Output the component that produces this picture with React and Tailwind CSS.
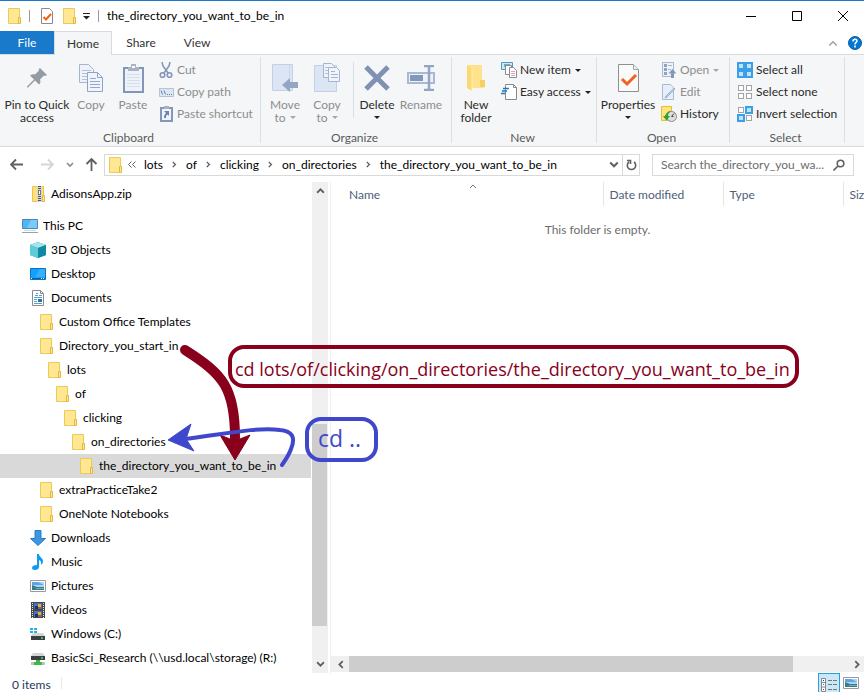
import React from "react";

const Folder = () => (
  <svg width="16" height="16" viewBox="0 0 16 16" className="shrink-0">
    <path d="M2.5 .5h11v15h-11z" fill="#ffe794" stroke="#edc956" />
    <path d="M12.5 9.5h2v6h-2z" fill="#ffe794" stroke="#e3b93c" />
  </svg>
);

const Zip = () => (
  <svg width="16" height="16" viewBox="0 0 16 16" className="shrink-0">
    <path d="M2.5 .5h11v15h-11z" fill="#ffe07a" stroke="#edc14a" />
    <path d="M12.5 9.5h2v6h-2z" fill="#ffe794" stroke="#e3b93c" />
    <path d="M7 0h5v16H7z" fill="#d7d7d7" />
    <path d="M9.500 0v16" stroke="#555" strokeWidth="3" strokeDasharray="1 1" />
    <path d="M8 4h3v5H8z" fill="#777" />
    <path d="M9 5h1v3H9z" fill="#fff" />
  </svg>
);

const ThisPC = () => (
  <svg width="16" height="16" viewBox="0 0 16 16" className="shrink-0">
    <path d="M.5 1.500h15v9H.5z" fill="#4fb7f5" stroke="#4b89b0" />
    <path d="M9 2h6v8H5z" fill="#7bcbfa" />
    <path d="M0 14.500h16" stroke="#8fa5b3" />
    <path d="M2 12.500h12" stroke="#d3dce2" />
  </svg>
);

const Cube = () => (
  <svg width="16" height="16" viewBox="0 0 16 16" className="shrink-0">
    <path d="M8 0l8 3v10l-8 3-8-3V3z" fill="#1fa3b8" />
    <path d="M8 0l8 3-8 3-8-3z" fill="#a6e3ea" />
    <path d="M0 3l8 3v10l-8-3z" fill="#5fcbd8" />
    <path d="M8 6l8-3v10l-8 3z" fill="#0f8aa5" />
  </svg>
);

const Desktop = () => (
  <svg width="16" height="16" viewBox="0 0 16 16" className="shrink-0">
    <path d="M.5 2.500h15v11H.5z" fill="#14a0ff" stroke="#0f6fb8" />
    <path d="M10 3h5v8H5z" fill="#35b0ff" />
    <path d="M1 12.500h14" stroke="#0a5ea8" />
    <path d="M1 12.500h1M11 12.500h1M13 12.500h1" stroke="#fff" />
  </svg>
);

const Documents = () => (
  <svg width="16" height="16" viewBox="0 0 16 16" className="shrink-0">
    <path d="M2.500 .5h8l3 3v12h-11z" fill="#fff" stroke="#8b8b8b" />
    <path d="M10.500 .5v3h3" fill="none" stroke="#8b8b8b" />
    <path d="M6 3.500h2M5 5.500h3M9 5.500h3M4 7.500h8M4 9.500h3M4 11.500h3M4 13.500h8" stroke="#4aa3d8" />
    <path d="M8 9h4v3H8z" fill="#3a6f95" />
  </svg>
);

const Downloads = () => (
  <svg width="16" height="16" viewBox="0 0 16 16" className="shrink-0">
    <path d="M5 .5h6v8h4.500L8 15.500.5 8.500H5z" fill="#3b97e3" stroke="#2b7cc4" />
  </svg>
);

const Music = () => (
  <svg width="16" height="16" viewBox="0 0 16 16" className="shrink-0">
    <path d="M7 0h2c0 3 4 4 4 7 0 2-1 3-2 4 .500-3 0-4-2-5v7c0 2-2 3-4 3s-3-1-3-2c0-2 2-3 5-3z" fill="#0f9bf2" />
  </svg>
);

const Pictures = () => (
  <svg width="16" height="16" viewBox="0 0 16 16" className="shrink-0">
    <path d="M.5 2.500h15v11H.5z" fill="#fff" stroke="#9a9a9a" />
    <path d="M2 4h12v8H2z" fill="#a9d5f7" />
    <path d="M2 4h6l6 3H2z" fill="#5ba5e6" />
    <path d="M2 7l5 2h7v3H2z" fill="#3d7c80" />
    <path d="M6 10.500h8" stroke="#6fa9cf" />
  </svg>
);

const Videos = () => (
  <svg width="16" height="16" viewBox="0 0 16 16" className="shrink-0">
    <path d="M1 0h14v16H1z" fill="#474747" />
    <path d="M2.500 1v15M13.500 1v15" stroke="#e8e8e8" strokeDasharray="1 1" />
    <path d="M4 1h8v6H4zM4 9h8v6H4z" fill="#3f74c7" />
    <path d="M5 4h3v3H5zM5 12h3v3H5z" fill="#1f2f60" />
    <path d="M8 2h3v3H8zM8 10h3v3H8z" fill="#e8b32a" />
    <path d="M9 5h2v2H9zM9 13h2v2H9z" fill="#c44b2c" />
  </svg>
);

const DriveC = () => (
  <svg width="16" height="16" viewBox="0 0 16 16" className="shrink-0">
    <path d="M0 2h3v2H0zM4 2h3v2H4zM0 5h3v2H0zM4 5h3v2H4z" fill="#1fb4f0" />
    <path d="M3 7h10l2 3H1z" fill="#d5d5d5" />
    <path d="M1 10h14v4H1z" fill="#3c3f41" />
    <path d="M11 12h2" stroke="#3bea5c" strokeWidth="1.500" />
  </svg>
);

const DriveNet = () => (
  <svg width="16" height="16" viewBox="0 0 16 16" className="shrink-0">
    <path d="M3 3h10l2 3H1z" fill="#d5d5d5" />
    <path d="M1 6h14v4H1z" fill="#3c3f41" />
    <path d="M11 8h2" stroke="#3bea5c" strokeWidth="1.500" />
    <path d="M6 10h4v2H6zM3 12h10v3H3z" fill="#43b649" />
    <path d="M1 13.500h3M12 13.500h3" stroke="#b9c9b9" strokeWidth="3" />
  </svg>
);

const tree = [
  { label: "This PC", level: 0, icon: ThisPC },
  { label: "3D Objects", level: 1, icon: Cube },
  { label: "Desktop", level: 1, icon: Desktop },
  { label: "Documents", level: 1, icon: Documents },
  { label: "Custom Office Templates", level: 2, icon: Folder },
  { label: "Directory_you_start_in", level: 2, icon: Folder },
  { label: "lots", level: 3, icon: Folder },
  { label: "of", level: 4, icon: Folder },
  { label: "clicking", level: 5, icon: Folder },
  { label: "on_directories", level: 6, icon: Folder },
  { label: "the_directory_you_want_to_be_in", level: 7, icon: Folder, selected: true },
  { label: "extraPracticeTake2", level: 2, icon: Folder },
  { label: "OneNote Notebooks", level: 2, icon: Folder },
  { label: "Downloads", level: 1, icon: Downloads },
  { label: "Music", level: 1, icon: Music },
  { label: "Pictures", level: 1, icon: Pictures },
  { label: "Videos", level: 1, icon: Videos },
  { label: "Windows (C:)", level: 1, icon: DriveC },
  { label: "BasicSci_Research (\\\\usd.local\\storage) (R:)", level: 1, icon: DriveNet },
];

function TreeRow({ label, level, icon: Icon, selected }) {
  return (
    <li>
      <button
        className={"flex h-6 w-full items-center gap-[5px] whitespace-nowrap text-left " + (selected ? "bg-[#d9d9d9]" : "")}
        style={{ paddingLeft: 22 + level * 8 }}
      >
        <Icon />
        <span>{label}</span>
      </button>
    </li>
  );
}

const Caret = ({ muted }) => (
  <svg width="6" height="3" viewBox="0 0 6 3" className="inline-block shrink-0">
    <path d="M0 0h6L3 3z" fill={muted ? "#a8a8a8" : "#222"} />
  </svg>
);

function BigButton({ icon, lines, caret, muted, width }) {
  return (
    <button className={"flex flex-col items-center gap-1 whitespace-nowrap leading-[13px] " + width + (muted ? " text-[#8d8d8d]" : " text-[#2b2b2b]")}>
      <span className="flex h-8 items-center justify-center">{icon}</span>
      <span className="flex flex-col items-center">
        {lines.map((l, i) => (
          <span key={l} className="flex items-center gap-1">
            {l}
            {caret === "inline" && i === lines.length - 1 && <Caret muted={muted} />}
          </span>
        ))}
        {caret === "below" && (
          <span className="flex h-3 items-center">
            <Caret />
          </span>
        )}
      </span>
    </button>
  );
}

function SmallButton({ icon, label, caret, muted }) {
  return (
    <button className={"flex h-[22px] items-center gap-[3px] whitespace-nowrap " + (muted ? "text-[#8d8d8d]" : "text-[#2b2b2b]")}>
      <span className="flex w-4 justify-center">{icon}</span>
      <span className="pr-px">{label}</span>
      {caret && <Caret muted={muted} />}
    </button>
  );
}

function Group({ title, children }) {
  return (
    <section className="relative flex flex-col justify-between">
      <div className="flex pt-1">{children}</div>
      <h2 className="pr-1 text-center leading-4 text-[#5a5a5a]">{title}</h2>
      <span className="absolute right-0 top-[2px] h-[86px] w-px bg-[#dcdfe2]" />
    </section>
  );
}

const PinIcon = () => (
  <svg width="20" height="20" viewBox="0 0 20 20">
    <path d="M13 0l7 7-2 1-1-.500-4 4c1 3 0 4-1 5l-4-4-7 7H0v-1l7-7-4-4c2-1.500 4-1.500 5-1l4-4-.500-1z" fill="#939ca4" />
  </svg>
);
const CopyIcon = () => (
  <svg width="26" height="28" viewBox="0 0 26 28">
    <path d="M1.500 .5h9l5 5v13h-14z" fill="#eef3fa" stroke="#a3b5d0" />
    <path d="M4 6.500h9M4 9.500h9M4 12.500h9M4 15.500h5" stroke="#b2c1d8" />
    <path d="M9.500 8.500h10l5 5v14h-15z" fill="#f1f5fb" stroke="#8fa5c5" />
    <path d="M19.500 8.500v5h5" fill="none" stroke="#8fa5c5" />
    <path d="M12 14.500h6M12 17.500h10M12 20.500h10M12 23.500h10" stroke="#94a9c9" />
  </svg>
);
const PasteIcon = () => (
  <svg width="21" height="29" viewBox="0 0 21 29">
    <path d="M1 4h19v24H1z" fill="#eef3fa" stroke="#8396b8" strokeWidth="2" />
    <path d="M4 10.500h13M4 13.500h13M4 16.500h13M4 19.500h13M4 22.500h13" stroke="#d3deee" />
    <path d="M5 3h3V0h5v3h3v4H5z" fill="#a9b2c0" />
    <path d="M9 2h3v2H9z" fill="#fff" />
  </svg>
);
const CutIcon = () => (
  <svg width="14" height="17" viewBox="0 0 14 17" fill="none" stroke="#8397bb" strokeWidth="1.600">
    <path d="M3 0l1 4 5 7M11 0l-1 4-5 7" />
    <circle cx="3.500" cy="13" r="2.300" />
    <circle cx="10.500" cy="13" r="2.300" />
  </svg>
);
const PathIcon = () => (
  <svg width="15" height="9" viewBox="0 0 15 9">
    <path d="M.5 .5h14v8H.5z" fill="#dce6f4" stroke="#b3c3dc" />
    <path d="M2 2.500l1.500 4M5 2.500l1.500 4" stroke="#6d80a5" />
    <path d="M8 6.500h1M10 6.500h1M12 6.500h1" stroke="#6d80a5" />
  </svg>
);
const ShortcutIcon = () => (
  <svg width="13" height="16" viewBox="0 0 13 16">
    <path d="M1 2h11v13H1z" fill="#f1f5fb" stroke="#8397bb" strokeWidth="2" />
    <path d="M4 0h5v3H4z" fill="#a9b2c0" />
    <path d="M4 5h5v5L7.500 8.500C6 9.500 6 10.500 6 12H4c0-2 .500-3.500 2-5z" fill="#6d84ad" />
  </svg>
);
const MoveIcon = () => (
  <svg width="27" height="29" viewBox="0 0 27 29">
    <path d="M.5 .5h20v26H.5z" fill="#dbe5f4" stroke="#c3d1e8" />
    <path d="M17.500 .5v26" stroke="#cad7eb" />
    <path d="M26 18v6h-8v4l-8-7 8-7v4z" fill="#95a5c4" />
  </svg>
);
const CopyToIcon = () => (
  <svg width="27" height="30" viewBox="0 0 27 30">
    <path d="M.5 2.500h22v26H.5z" fill="#dbe5f4" stroke="#c3d1e8" />
    <path d="M9.500 .5h8l3 3v11h-11z" fill="#eef3fa" stroke="#a3b5d0" />
    <path d="M11 4.500h6M11 7.500h6M11 10.500h6" stroke="#b2c1d8" />
    <path d="M14.500 4.500h8l3 3v11h-11z" fill="#f1f5fb" stroke="#a3b5d0" />
    <path d="M17 8.500h4M17 11.500h7M17 14.500h7" stroke="#a3b5d0" />
  </svg>
);
const DeleteIcon = () => (
  <svg width="26" height="26" viewBox="0 0 26 26">
    <path d="M2 2l22 22M24 2L2 24" stroke="#8092b4" strokeWidth="5" />
  </svg>
);
const RenameIcon = () => (
  <svg width="28" height="26" viewBox="0 0 28 26">
    <path d="M1 8h26v10H1z" fill="#eef3fa" stroke="#a9b9d3" strokeWidth="2" />
    <path d="M3 10h13v6H3z" fill="#8397bb" />
    <path d="M17 1h4l1 1 1-1h4M22 1v24M17 25h4l1-1 1 1h4" fill="none" stroke="#94a4c3" strokeWidth="2.500" />
  </svg>
);
const NewFolderIcon = () => (
  <svg width="20" height="28" viewBox="0 0 20 28">
    <path d="M1 1h15v15l2 1v7H1z" fill="#ffe28c" />
    <path d="M14 16h5v7h-5z" fill="#f7cf66" />
    <path d="M1 1l5 4v22l-5-3z" fill="#fcd873" />
    <path d="M6 5v22" stroke="#fff0bd" />
  </svg>
);
const NewItemIcon = () => (
  <svg width="16" height="16" viewBox="0 0 16 16">
    <path d="M.5 .5h11v7H.5z" fill="#cdeafa" stroke="#4a9cc8" />
    <path d="M3 2h6v3H3z" fill="#7ba8c2" />
    <path d="M4.500 3.500h6v9h-6z" fill="#fff" stroke="#8a8a8a" />
    <path d="M8.500 5.500h4l3 3v7h-7z" fill="#fff" stroke="#8a8a8a" />
    <path d="M10 9.500h4M10 11.500h4M10 13.500h4" stroke="#d9a3c0" />
  </svg>
);
const EasyIcon = () => (
  <svg width="16" height="16" viewBox="0 0 16 16">
    <path d="M4.500 .5h8l3 3v12h-11z" fill="#fff" stroke="#8a8a8a" />
    <path d="M12.500 .5v3h3" fill="none" stroke="#8a8a8a" />
    <path d="M2 4.500h6M1 7h5M0 9.500h4" stroke="#1f78c1" strokeWidth="1.500" />
  </svg>
);
const PropertiesIcon = () => (
  <svg width="21" height="28" viewBox="0 0 21 28">
    <path d="M.5 .5h15l5 5v22H.5z" fill="#fafafa" stroke="#8f8f8f" />
    <path d="M15.500 .5v5h5" fill="#eee" stroke="#a5a5a5" />
    <path d="M4 15l5 5 9-9" fill="none" stroke="#f2601c" strokeWidth="3" />
  </svg>
);
const OpenIcon = () => (
  <svg width="14" height="16" viewBox="0 0 14 16">
    <path d="M.5 .5h11v14H.5z" fill="#eef3fa" stroke="#a9b9d3" />
    <path d="M2 2h3v3H2zM2 6h3v3H2zM2 10h3v3H2z" fill="#8fa3c4" />
    <path d="M6 3.500h4M6 7.500h3" stroke="#a9b9d3" />
    <path d="M10.500 7l4 4.500H12V16H9v-4.500H6.500z" fill="#8397bb" />
  </svg>
);
const EditIcon = () => (
  <svg width="14" height="16" viewBox="0 0 14 16">
    <path d="M.5 .5h8l3 3v12H.5z" fill="#e6eef9" stroke="#a9b9d3" />
    <path d="M13 5L5 13l-2 1 1-2 8-8z" fill="#c4d2e8" stroke="#9fb0cd" />
  </svg>
);
const HistoryIcon = () => (
  <svg width="16" height="16" viewBox="0 0 16 16">
    <path d="M.5 .5h10v14H.5z" fill="#ffe579" stroke="#e3bd45" />
    <circle cx="10.500" cy="10.500" r="5" fill="#dedede" stroke="#8a8a8a" />
    <path d="M10.500 10.500l2.500-3M10.500 10.500h2" stroke="#444" />
    <path d="M2 10h2c1-3 3-5 6-5-2 1.500-3 3-3 5h2l-3.500 4.500z" fill="#2da23a" />
  </svg>
);
const Squares = ({ on }) => (
  <svg width="16" height="16" viewBox="0 0 16 16">
    {[0, 1, 2, 3].map((i) => {
      const x = (i % 2) * 8;
      const y = i > 1 ? 8 : 0;
      return on.includes(i) ? (
        <rect key={i} x={x + 1} y={y + 1} width="6" height="6" fill="#bfe3fa" stroke="#3a9fe6" strokeWidth="2" />
      ) : (
        <rect key={i} x={x + 1.5} y={y + 1.5} width="5" height="5" fill="#fff" stroke="#a3a3a3" />
      );
    })}
  </svg>
);

const Chevron = ({ d, color = "#606060", w = 8, h = 8, sw = 1.6 }) => (
  <svg width={w} height={h} viewBox="0 0 8 8" fill="none" stroke={color} strokeWidth={sw} className="shrink-0">
    <path d={d} />
  </svg>
);
const UP = "M1 6l3-3 3 3";
const DOWN = "M1 2l3 3 3-3";
const LEFT = "M6 1L3 4l3 3";
const RIGHT = "M2 1l3 3-3 3";

function TitleBar() {
  return (
    <header className="flex h-[31px] items-center border-t border-[#1979ca] bg-white">
      <div className="flex flex-1 items-center pl-[6px]">
        <Folder />
        <span className="ml-[7px] h-3 w-px bg-[#9a9a9a]" />
        <button aria-label="Properties" className="ml-[10px]">
          <svg width="14" height="16" viewBox="0 0 14 16" className="block">
            <path d="M1.500 .5h8l3 3v12h-11z" fill="#fff" stroke="#8a8a8a" />
            <path d="M3.500 9l2.500 2.500L11 6" fill="none" stroke="#f2601c" strokeWidth="2" />
          </svg>
        </button>
        <button aria-label="New folder" className="ml-[7px]"><Folder /></button>
        <button aria-label="Customize Quick Access Toolbar" className="ml-[6px]">
          <svg width="7" height="7" viewBox="0 0 7 7" className="block">
            <path d="M0 .5h7" stroke="#222" />
            <path d="M0 3h7L3.500 6.500z" fill="#222" />
          </svg>
        </button>
        <span className="ml-2 h-3 w-px bg-[#9a9a9a]" />
        <h1 className="ml-2">the_directory_you_want_to_be_in</h1>
      </div>
      {[
        ["Minimize", "M0 5.500h10"],
        ["Maximize", "M.5 .5h9v9h-9z"],
        ["Close", "M0 0l10 10M10 0L0 10"],
      ].map(([name, d]) => (
        <button key={name} aria-label={name} className="flex h-full w-[46px] items-center justify-center pl-1">
          <svg width="10" height="10" viewBox="0 0 10 10" fill="none" stroke="#000" strokeWidth="1">
            <path d={d} />
          </svg>
        </button>
      ))}
    </header>
  );
}

function Ribbon() {
  return (
    <>
      <nav className="flex h-6 items-stretch border-b border-[#dadbdc] bg-white text-[#333]">
        <button className="w-[54px] bg-[#1979ca] text-white">File</button>
        <button className="-mb-px w-[58px] border border-b-0 border-[#dadbdc] bg-[#f5f6f7]">Home</button>
        <button className="w-[58px]">Share</button>
        <button className="w-[54px]">View</button>
        <span className="flex-1" />
        <button aria-label="Collapse ribbon" className="px-[10px]"><Chevron d={UP} color="#a0a0a0" w={10} h={10} sw={1.2} /></button>
        <button aria-label="Help" className="mr-[2px]">
          <svg width="14" height="14" viewBox="0 0 14 14">
            <circle cx="7" cy="7" r="6.500" fill="#0078d7" stroke="#1a5c96" />
            <path d="M5 5.500c0-3 4-3 4-.500 0 1.500-2 1.500-2 3.500M7 9.500v2" fill="none" stroke="#fff" strokeWidth="1.600" />
          </svg>
        </button>
      </nav>
      <div className="grid h-[92px] shrink-0 grid-cols-[261px_191px_145px_133px_115px_1fr] border-b border-[#dadbdc] bg-[#f5f6f7]">
        <Group title="Clipboard">
          <div className="flex pl-1 pt-[3px]">
            <BigButton width="w-[66px]" icon={<PinIcon />} lines={["Pin to Quick", "access"]} />
            <BigButton width="w-[42px]" icon={<CopyIcon />} lines={["Copy"]} muted />
            <BigButton width="w-[42px]" icon={<PasteIcon />} lines={["Paste"]} muted />
          </div>
          <div className="ml-1">
            <SmallButton icon={<CutIcon />} label="Cut" muted />
            <SmallButton icon={<PathIcon />} label="Copy path" muted />
            <SmallButton icon={<ShortcutIcon />} label="Paste shortcut" muted />
          </div>
        </Group>
        <Group title="Organize">
          <div className="flex pl-[3px] pt-[3px]">
            <BigButton width="w-[42px]" icon={<MoveIcon />} lines={["Move", "to"]} caret="inline" muted />
            <BigButton width="w-[42px]" icon={<CopyToIcon />} lines={["Copy", "to"]} caret="inline" muted />
            <span className="ml-[5px] mr-px h-14 w-px bg-[#dcdfe2]" />
            <BigButton width="w-11" icon={<DeleteIcon />} lines={["Delete"]} caret="below" />
            <BigButton width="w-11" icon={<RenameIcon />} lines={["Rename"]} muted />
          </div>
        </Group>
        <Group title="New">
          <div className="flex pl-[3px] pt-[3px]">
            <BigButton width="w-[42px]" icon={<NewFolderIcon />} lines={["New", "folder"]} />
          </div>
          <div className="ml-1">
            <SmallButton icon={<NewItemIcon />} label="New item" caret />
            <SmallButton icon={<EasyIcon />} label="Easy access" caret />
          </div>
        </Group>
        <Group title="Open">
          <div className="flex pl-1 pt-[3px]">
            <BigButton width="w-[54px]" icon={<PropertiesIcon />} lines={["Properties"]} caret="below" />
          </div>
          <div className="ml-[6px]">
            <SmallButton icon={<OpenIcon />} label="Open" caret muted />
            <SmallButton icon={<EditIcon />} label="Edit" muted />
            <SmallButton icon={<HistoryIcon />} label="History" />
          </div>
        </Group>
        <Group title="Select">
          <div className="ml-[7px]">
            <SmallButton icon={<Squares on={[0, 1, 2, 3]} />} label="Select all" />
            <SmallButton icon={<Squares on={[]} />} label="Select none" />
            <SmallButton icon={<Squares on={[1, 2]} />} label="Invert selection" />
          </div>
        </Group>
      </div>
    </>
  );
}

const arrow = { left: "M13 6.500H1M6 1.500l-5 5 5 5", right: "M0 6.500h12M7 1.500l5 5-5 5", up: "M6.500 13V1M1.500 6l5-5 5 5" };
const NavArrow = ({ dir, color }) => (
  <svg width="13" height="13" viewBox="0 0 13 13" fill="none" stroke={color} strokeWidth="1.800" className="block">
    <path d={arrow[dir]} />
  </svg>
);

function AddressBar() {
  const crumbs = ["lots", "of", "clicking", "on_directories", "the_directory_you_want_to_be_in"];
  return (
    <div className="flex h-[35px] shrink-0 items-center pl-[10px] pr-[10px]">
      <button aria-label="Back"><NavArrow dir="left" color="#606060" /></button>
      <button aria-label="Forward" className="ml-[18px]"><NavArrow dir="right" color="#d5d5d5" /></button>
      <button aria-label="Recent locations" className="ml-3"><Chevron d={DOWN} color="#8a8a8a" /></button>
      <button aria-label="Up" className="ml-[11px]"><NavArrow dir="up" color="#606060" /></button>
      <div className="ml-[6px] flex h-[22px] min-w-0 flex-1 items-center border border-[#d9d9d9] pl-[2px]">
        <Folder />
        <svg width="8" height="7" viewBox="0 0 8 7" fill="none" stroke="#606060" className="ml-[5px] shrink-0">
          <path d="M3.500 .5l-3 3 3 3M7.500 .5l-3 3 3 3" />
        </svg>
        <div className="ml-2 flex flex-1 items-center">
          {crumbs.map((c, i) => (
            <React.Fragment key={c}>
              {i > 0 && <span className="flex w-[23px] justify-center"><Chevron d={RIGHT} w={7} h={7} /></span>}
              <button>{c}</button>
            </React.Fragment>
          ))}
        </div>
        <button aria-label="Previous locations" className="px-[3px]"><Chevron d={DOWN} w={10} h={10} /></button>
        <button aria-label="Refresh" className="flex h-full w-[17px] items-center justify-center border-l border-[#d9d9d9]">
          <svg width="11" height="12" viewBox="0 0 11 12" fill="none" stroke="#606060" strokeWidth="1.600">
            <path d="M8 3a4.200 4.200 0 1 1-5 0M1 1.500h3.500V5" />
          </svg>
        </button>
      </div>
      <label className="ml-3 flex h-[22px] w-[202px] items-center border border-[#d9d9d9] pl-2 pr-2">
        <input
          aria-label="Search"
          placeholder="Search the_directory_you_wa..."
          className="min-w-0 flex-1 bg-transparent outline-none placeholder:text-[#6d6d6d] placeholder:opacity-100"
        />
        <svg width="12" height="12" viewBox="0 0 12 12" fill="none" stroke="#606060" strokeWidth="1.600">
          <circle cx="7.500" cy="4.500" r="3.300" />
          <path d="M5 7l-4.500 4.500" />
        </svg>
      </label>
    </div>
  );
}

function Files() {
  return (
    <main className="flex min-w-0 flex-1 flex-col">
      <div className="relative overflow-hidden">
        <table className="w-full table-fixed border-collapse text-left text-[#4c607a]">
          <thead>
            <tr className="h-6">
              <th className="w-[272px] border-r border-[#e5e5e5] pl-[18px] pt-[2px] font-normal">Name</th>
              <th className="w-[120px] border-r border-[#e5e5e5] pl-[6px] pt-[2px] font-normal">Date modified</th>
              <th className="w-[120px] border-r border-[#e5e5e5] pl-[6px] pt-[2px] font-normal">Type</th>
              <th className="pl-[6px] pt-[2px] font-normal">Size</th>
            </tr>
          </thead>
        </table>
        <span className="absolute left-[137px] top-0"><Chevron d={UP} color="#777" w={10} h={8} sw={1} /></span>
      </div>
      <p className="mt-4 flex-1 text-center text-[#6d6d6d]">This folder is empty.</p>
      <div className="mb-[2px] flex h-4 bg-[#f0f0f0]">
        <button aria-label="Scroll left" className="flex w-[18px] items-center justify-center"><Chevron d={LEFT} w={9} h={9} /></button>
        <span className="w-[444px] bg-[#cdcdcd]" />
        <span className="flex-1" />
        <button aria-label="Scroll right" className="flex w-[14px] items-center justify-center"><Chevron d={RIGHT} w={9} h={9} /></button>
      </div>
    </main>
  );
}

function Annotations() {
  return (
    <div className="font-['Open_Sans',sans-serif]">
      <svg width="320" height="140" viewBox="165 335 320 140" fill="none" className="pointer-events-none absolute left-[165px] top-[335px]">
        <path d="M185 350C223 374 235 388 235 438" stroke="#88001b" strokeWidth="10" strokeLinecap="round" />
        <path d="M220 435l15 6 15-6-15 25z" fill="#88001b" stroke="#88001b" />
        <path d="M185 439C225 434 256 427 280 430c12 1 16 7 11 19q-2 6-9 16" stroke="#3f48cc" strokeWidth="4" strokeLinecap="round" />
        <path d="M168 440l23-16-5 15 8 12z" fill="#3f48cc" stroke="#3f48cc" />
      </svg>
      <div className="absolute left-[228px] top-[345px] flex h-[43px] w-[571px] items-center whitespace-nowrap rounded-2xl border-4 border-[#88001b] pl-[3px] pt-1 text-[18px] text-[#88001b]">
        cd lots/of/clicking/on_directories/the_directory_you_want_to_be_in
      </div>
      <div className="absolute left-[305px] top-[417px] flex h-[45px] w-[73px] items-center rounded-2xl border-4 border-[#3f48cc] pb-1 pl-[9px] text-[23px] text-[#3f48cc]">
        cd ..
      </div>
    </div>
  );
}

export default function App() {
  return (
    <div className="relative flex h-screen flex-col overflow-hidden bg-white font-['Lato',sans-serif] text-[12px] leading-4 text-black">
      <TitleBar />
      <Ribbon />
      <AddressBar />
      <div className="flex min-h-0 flex-1">
        <aside className="flex w-[331px] shrink-0 border-r border-[#f0f0f0]">
          <ul className="w-[311px] overflow-hidden">
            <TreeRow label="AdisonsApp.zip" level={1} icon={Zip} />
            <li className="h-2" />
            {tree.map((t) => <TreeRow key={t.label} {...t} />)}
          </ul>
          <div className="ml-px mb-px flex w-4 flex-col bg-[#f0f0f0]">
            <button aria-label="Scroll up" className="flex h-[17px] items-center justify-center"><Chevron d={UP} w={9} h={9} /></button>
            <span className="flex-[225]" />
            <span className="mr-px flex-[203] bg-[#cdcdcd]" />
            <span className="flex-[30]" />
            <button aria-label="Scroll down" className="flex h-[17px] items-center justify-center"><Chevron d={DOWN} w={9} h={9} /></button>
          </div>
        </aside>
        <Files />
      </div>
      <footer className="flex h-[18px] shrink-0 items-center pl-3 text-[#1e395b]">
        <span className="pt-1">0 items</span>
        <span className="ml-[10px] h-3 w-px bg-[#e8e8e8]" />
        <span className="flex-1" />
        <button aria-label="Details view" className="-mt-px flex h-[19px] w-[22px] items-end justify-center border border-b-0 border-[#26a0da] bg-[#cce8f6]">
          <svg width="16" height="14" viewBox="0 0 16 14">
            <path d="M.5 .5h4v13h-4zM.5 4.500h4M.5 9h4" fill="#fff" stroke="#888" />
            <path d="M7 2.500h4M12 2.500h4M7 6.500h4M12 6.500h4M7 11.500h4M12 11.500h4" stroke="#777" />
            <path d="M2 2h1v1H2z" fill="#23a" /><path d="M2 6h1v1H2z" fill="#28d" /><path d="M2 11h1v1H2z" fill="#c22" />
          </svg>
        </button>
        <button aria-label="Large icons view" className="ml-[3px] mr-[5px]">
          <Pictures />
        </button>
      </footer>
      <Annotations />
    </div>
  );
}
